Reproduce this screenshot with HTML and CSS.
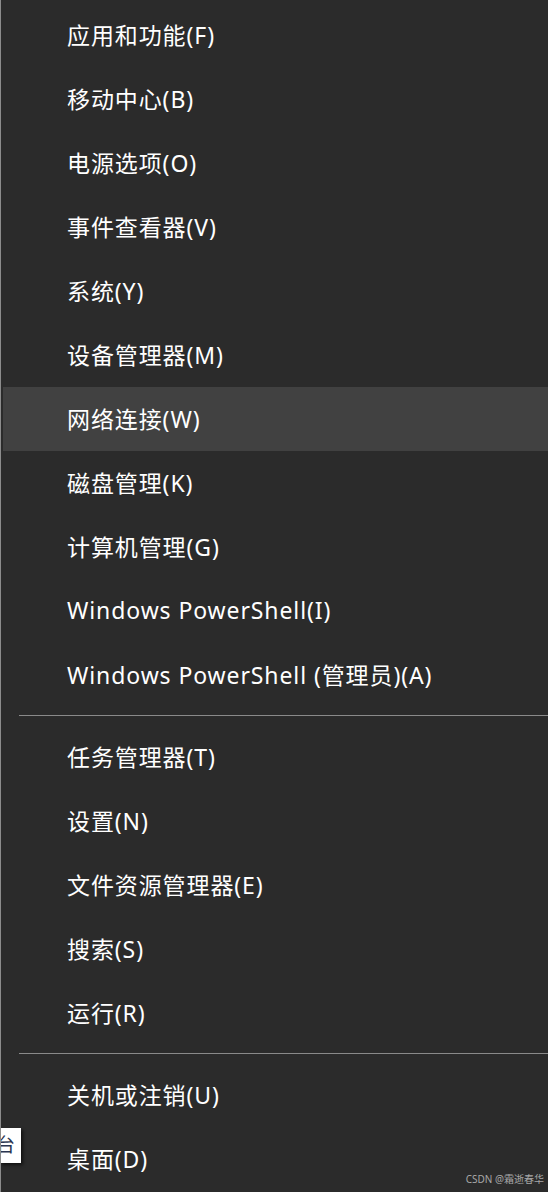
FILE: index.html
```html
<!DOCTYPE html>
<html lang="zh-CN">
<head>
<meta charset="utf-8">
<title>Menu</title>
<link rel="stylesheet" href="styles.css">
</head>
<body>
<div class="menu">
  <div class="group first">
    <div class="item">应用和功能(F)</div>
    <div class="item">移动中心(B)</div>
    <div class="item">电源选项(O)</div>
    <div class="item">事件查看器(V)</div>
    <div class="item">系统(Y)</div>
    <div class="item">设备管理器(M)</div>
    <div class="item hover">网络连接(W)</div>
    <div class="item">磁盘管理(K)</div>
    <div class="item">计算机管理(G)</div>
    <div class="item">Windows PowerShell(I)</div>
    <div class="item">Windows PowerShell (管理员)(A)</div>
  </div>
  <div class="sep"></div>
  <div class="group">
    <div class="item">任务管理器(T)</div>
    <div class="item">设置(N)</div>
    <div class="item">文件资源管理器(E)</div>
    <div class="item">搜索(S)</div>
    <div class="item">运行(R)</div>
  </div>
  <div class="sep"></div>
  <div class="group">
    <div class="item">关机或注销(U)</div>
    <div class="item">桌面(D)</div>
  </div>
  <div class="tip">台</div>
  <div class="mark">CSDN @霜逝春华</div>
</div>
</body>
</html>
```

FILE: styles.css
```css
html, body {
  margin: 0;
  padding: 0;
  background: #2b2b2b;
}
.menu {
  position: relative;
  width: 548px;
  height: 1192px;
  box-sizing: border-box;
  background: #2b2b2b;
  border-left: 1px solid #8c8c8c;
  padding-left: 2px;
  padding-top: 3px;
  overflow: hidden;
  font-family: "Noto Sans", "Noto Sans CJK SC", sans-serif;
  color: #ffffff;
}
.group {
  display: flex;
  flex-direction: column;
}
.item {
  height: 64px;
  box-sizing: border-box;
  display: flex;
  align-items: center;
  padding-left: 64px;
  padding-bottom: 3px;
  font-size: 23px;
  white-space: nowrap;
  letter-spacing: 0.9px;
}
.item.hover {
  background: #414141;
}
.sep {
  height: 18px;
  display: flex;
  flex-direction: column;
  padding: 8px 0 0 16px;
  box-sizing: border-box;
}
.sep::before {
  content: "";
  display: block;
  height: 1px;
  background: #8a8a8a;
}
.tip {
  position: absolute;
  left: -1px;
  top: 1128px;
  width: 21px;
  height: 35px;
  background: #ffffff;
  color: #2a3550;
  font-size: 19px;
  line-height: 35px;
  text-indent: -4px;
  overflow: hidden;
  box-shadow: 2px 2px 3px rgba(0, 0, 0, 0.6);
}
.mark {
  position: absolute;
  right: 4px;
  bottom: 6px;
  font-family: "Noto Sans", "Noto Sans CJK SC", sans-serif;
  font-size: 10px;
  color: #a8a8a8;
}
```
